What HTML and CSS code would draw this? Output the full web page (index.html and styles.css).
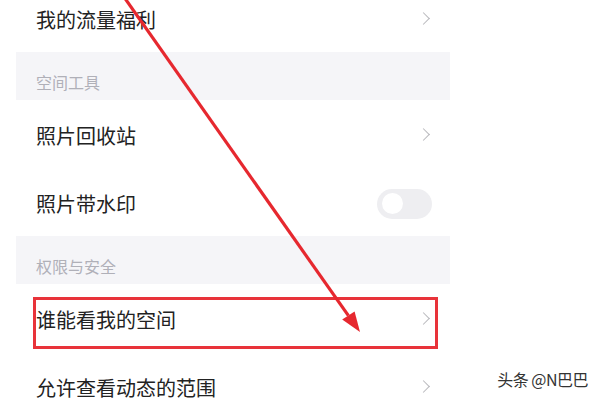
FILE: index.html
```html
<!DOCTYPE html>
<html>
<head>
    <meta charset="UTF-8">
    <title>设置</title>
    <link rel="stylesheet" href="styles.css">
</head>
<body>
<main class="page">
    <div class="list">
        <div class="row">
            <span class="label">我的流量福利</span>
            <span class="chevron"></span>
        </div>
        <div class="group">空间工具</div>
        <div class="row">
            <span class="label">照片回收站</span>
            <span class="chevron"></span>
        </div>
        <div class="row">
            <span class="label">照片带水印</span>
            <span class="switch"><i></i></span>
        </div>
        <div class="group">权限与安全</div>
        <div class="row">
            <span class="label">谁能看我的空间</span>
            <span class="chevron"></span>
        </div>
        <div class="row">
            <span class="label">允许查看动态的范围</span>
            <span class="chevron"></span>
        </div>
    </div>

    <!-- 标注：红框 + 箭头 -->
    <svg class="mark" width="600" height="400" viewBox="0 0 600 400">
        <rect x="34.5" y="298.5" width="402" height="49" fill="none" stroke="#e8333a" stroke-width="3"/>
        <line x1="124" y1="-3" x2="348.4" y2="315.7" stroke="#e6282f" stroke-width="3.2"/>
        <polygon points="360,332 342.2,319.6 354.6,311.4" fill="#e6282f"/>
    </svg>

    <div class="watermark">头条 @N巴巴</div>
</main>
</body>
</html>
```

FILE: styles.css
```css
html, body{
    margin: 0;
    height: 100%;
    background: #fff;
}

body{
    overflow: hidden;
    font-family: "Noto Sans CJK SC", "Noto Sans", sans-serif;
    color: #222;
}

.page{
    position: relative;
    display: flow-root;
    width: 600px;
    height: 400px;
    overflow: hidden;
}

.list{
    width: 434px;
    margin: -16px 0 0 16px;
}

.row{
    height: 68px;
    display: flex;
    align-items: center;
    justify-content: space-between;
    padding: 3px 18px 0 20px;
    box-sizing: border-box;
}
.label{
    font-size: 20px;
    line-height: 24px;
}

.chevron{
    width: 8px;
    height: 8px;
    margin-right: 4px;
    margin-top: -2px;
    border-top: 1.6px solid #b8b8bc;
    border-right: 1.6px solid #b8b8bc;
    transform: rotate(45deg);
}

.switch{
    width: 55px;
    height: 30px;
    border-radius: 15px;
    background: #eeeef1;
    display: flex;
    align-items: center;
    padding-left: 5px;
    box-sizing: border-box;
}
.switch i{
    width: 21px;
    height: 21px;
    border-radius: 50%;
    background: #fff;
}

.group{
    height: 48px;
    box-sizing: border-box;
    padding: 21px 0 0 20px;
    background: #f5f5f8;
    color: #b0b0b8;
    font-size: 16px;
    line-height: 18px;
}

.mark{
    position: absolute;
    top: 0;
    left: 0;
    pointer-events: none;
}

.watermark{
    position: absolute;
    right: 12px;
    bottom: 9px;
    font-size: 16px;
    color: #333;
    letter-spacing: -0.5px;
    text-shadow: 0 0 2px #fff;
}
```
